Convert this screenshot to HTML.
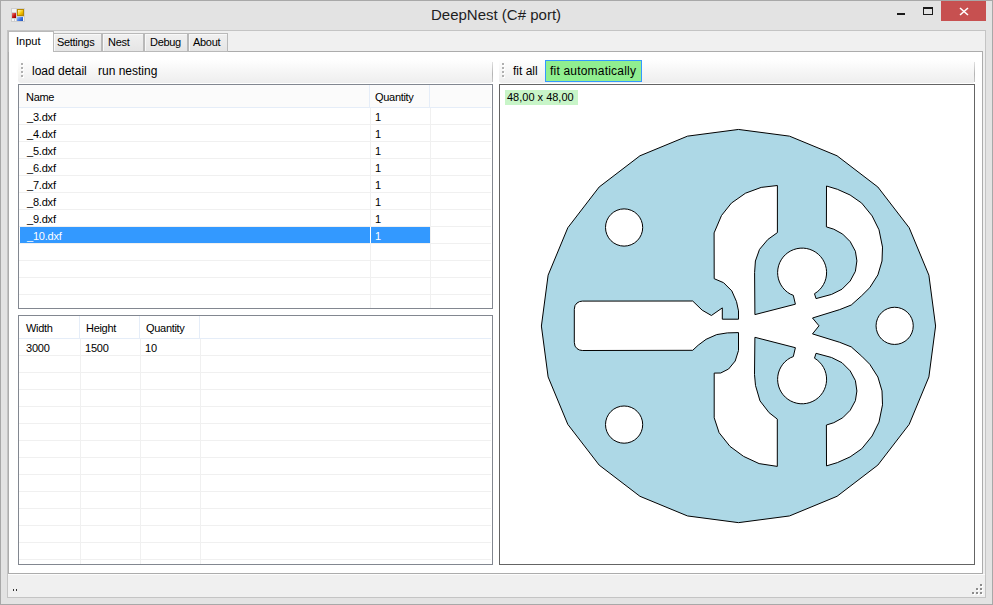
<!DOCTYPE html>
<html><head><meta charset="utf-8">
<style>
*{margin:0;padding:0;box-sizing:border-box}
html,body{width:993px;height:605px;overflow:hidden}
body{position:relative;background:#e3e3e3;font-family:"Liberation Sans",sans-serif;color:#000}
.a{position:absolute}
.frame{left:0;top:0;width:993px;height:605px;border:1px solid #a8a8a8}
.title{left:431px;top:6px;font-size:15px;color:#1e1e1e;white-space:nowrap}
.client{left:7px;top:30px;width:979px;height:568px;border:1px solid #c4c4c4;background:#f0f0f0}
.tab{top:33px;height:19px;border:1px solid #b9b9b9;box-shadow:inset 1px 1px 0 #f8f8f8;background:linear-gradient(#f0f0f0,#e5e5e5);font-size:11px;white-space:nowrap;letter-spacing:-0.3px}
.page{left:8px;top:51px;width:975px;height:523px;border:1px solid #acacac;background:#fff}
.tsel{left:8px;top:31px;width:46px;height:21px;border:1px solid #b9b9b9;border-bottom:none;background:#fff;font-size:11px}
.tool{top:59px;height:24px;border-radius:3px;background:linear-gradient(#ffffff,#f6f6f6 50%,#eeeeee);font-size:12px;white-space:nowrap}
.grip{width:2px;height:2px;background:#b0b0b0}
.lv{border:1px solid #828790;background:#fff;overflow:hidden}
.hd{font-size:11px;white-space:nowrap;letter-spacing:-0.3px}
.cell{font-size:11px;white-space:nowrap;letter-spacing:-0.2px}
</style></head><body>
<div class="a frame"></div>
<!-- icon -->
<div class="a" style="left:11px;top:8px;width:14px;height:14px;background:#cfcfcf"></div>
<div class="a" style="left:12px;top:9px;width:4px;height:3px;background:#f4f4f4"></div>
<div class="a" style="left:12px;top:19px;width:2px;height:2px;background:#f4f4f4"></div>
<div class="a" style="left:15px;top:19px;width:1px;height:2px;background:#f4f4f4"></div>
<div class="a" style="left:23px;top:17px;width:1px;height:4px;background:#f4f4f4"></div>
<div class="a" style="left:17px;top:9px;width:7px;height:7px;background:linear-gradient(135deg,#fff8c0,#f5c400 60%,#c89000);border:1px solid #b88a00"></div>
<div class="a" style="left:12px;top:13px;width:4px;height:5px;background:linear-gradient(135deg,#f08080,#c01010 60%,#800000)"></div>
<div class="a" style="left:17px;top:17px;width:6px;height:4px;background:linear-gradient(135deg,#a0c4ff,#3a70e0 60%,#2050b0)"></div>
<div class="a title">DeepNest (C# port)</div>
<!-- caption buttons -->
<div class="a" style="left:897px;top:13px;width:8px;height:2px;background:#1a1a1a"></div>
<div class="a" style="left:923px;top:7px;width:10px;height:8px;border:1px solid #1a1a1a;border-top-width:2px"></div>
<div class="a" style="left:941px;top:1px;width:45px;height:20px;background:#c75050"></div>
<svg class="a" style="left:959px;top:7px" width="10" height="9"><path d="M1,1 L9,8 M9,1 L1,8" stroke="#fff" stroke-width="1.6"/></svg>

<div class="a client"></div>
<div class="a page"></div>
<div class="a tab" style="left:53px;width:49px"><span class="a" style="left:3px;top:2px">Settings</span></div>
<div class="a tab" style="left:102px;width:42px"><span class="a" style="left:5px;top:2px">Nest</span></div>
<div class="a tab" style="left:144px;width:44px"><span class="a" style="left:5px;top:2px">Debug</span></div>
<div class="a tab" style="left:188px;width:40px"><span class="a" style="left:4px;top:2px">About</span></div>
<div class="a tsel"><span class="a" style="left:7px;top:3px">Input</span></div>

<!-- left toolbar -->
<div class="a tool" style="left:18px;width:475px"></div>
<div class="a" style="left:492px;top:62px;width:1px;height:20px;background:linear-gradient(#e0e0e0,#b4b4b4 60%,#c8c8c8)"></div>
<div class="a" style="left:22px;top:64px;width:2px;height:2px;background:#fff"></div><div class="a grip" style="left:21px;top:63px"></div>
<div class="a" style="left:22px;top:68px;width:2px;height:2px;background:#fff"></div><div class="a grip" style="left:21px;top:67px"></div>
<div class="a" style="left:22px;top:72px;width:2px;height:2px;background:#fff"></div><div class="a grip" style="left:21px;top:71px"></div>
<div class="a" style="left:22px;top:76px;width:2px;height:2px;background:#fff"></div><div class="a grip" style="left:21px;top:75px"></div>
<span class="a" style="left:32px;top:64px;font-size:12px">load detail</span>
<span class="a" style="left:98px;top:64px;font-size:12px">run nesting</span>

<!-- listview 1 -->
<div class="a lv" style="left:18px;top:84px;width:475px;height:225px">
<div class="a" style="left:0;top:0;width:472px;height:22px;background:#fbfbfb"></div>
<div class="a" style="left:0;top:22px;width:472px;height:1px;background:#e5edf8"></div>
<div class="a" style="left:350px;top:0;width:1px;height:22px;background:#e5edf8"></div>
<div class="a" style="left:410px;top:0;width:1px;height:22px;background:#e5edf8"></div>
<span class="a hd" style="left:7px;top:6px">Name</span>
<span class="a hd" style="left:356px;top:6px">Quantity</span>
<div class="a" style="left:0;top:39px;width:472px;height:1px;background:#f0f0f0"></div>
<div class="a" style="left:0;top:56px;width:472px;height:1px;background:#f0f0f0"></div>
<div class="a" style="left:0;top:73px;width:472px;height:1px;background:#f0f0f0"></div>
<div class="a" style="left:0;top:90px;width:472px;height:1px;background:#f0f0f0"></div>
<div class="a" style="left:0;top:107px;width:472px;height:1px;background:#f0f0f0"></div>
<div class="a" style="left:0;top:124px;width:472px;height:1px;background:#f0f0f0"></div>
<div class="a" style="left:0;top:141px;width:472px;height:1px;background:#f0f0f0"></div>
<div class="a" style="left:0;top:158px;width:472px;height:1px;background:#f0f0f0"></div>
<div class="a" style="left:0;top:175px;width:472px;height:1px;background:#f0f0f0"></div>
<div class="a" style="left:0;top:192px;width:472px;height:1px;background:#f0f0f0"></div>
<div class="a" style="left:0;top:209px;width:472px;height:1px;background:#f0f0f0"></div>
<div class="a" style="left:0;top:226px;width:472px;height:1px;background:#f0f0f0"></div>
<div class="a" style="left:351px;top:23px;width:1px;height:200px;background:#f0f0f0"></div>
<div class="a" style="left:411px;top:23px;width:1px;height:200px;background:#f0f0f0"></div>
<span class="a cell" style="left:8px;top:26px;color:#000">_3.dxf</span>
<span class="a cell" style="left:356px;top:26px;color:#000">1</span>
<span class="a cell" style="left:8px;top:43px;color:#000">_4.dxf</span>
<span class="a cell" style="left:356px;top:43px;color:#000">1</span>
<span class="a cell" style="left:8px;top:60px;color:#000">_5.dxf</span>
<span class="a cell" style="left:356px;top:60px;color:#000">1</span>
<span class="a cell" style="left:8px;top:77px;color:#000">_6.dxf</span>
<span class="a cell" style="left:356px;top:77px;color:#000">1</span>
<span class="a cell" style="left:8px;top:94px;color:#000">_7.dxf</span>
<span class="a cell" style="left:356px;top:94px;color:#000">1</span>
<span class="a cell" style="left:8px;top:111px;color:#000">_8.dxf</span>
<span class="a cell" style="left:356px;top:111px;color:#000">1</span>
<span class="a cell" style="left:8px;top:128px;color:#000">_9.dxf</span>
<span class="a cell" style="left:356px;top:128px;color:#000">1</span>
<div class="a" style="left:1px;top:142px;width:410px;height:16px;background:#3399ff"></div>
<div class="a" style="left:351px;top:142px;width:1px;height:16px;background:#fff"></div>
<span class="a cell" style="left:8px;top:145px;color:#fff">_10.dxf</span>
<span class="a cell" style="left:356px;top:145px;color:#fff">1</span>
</div>

<!-- listview 2 -->
<div class="a lv" style="left:18px;top:315px;width:475px;height:250px">
<div class="a" style="left:0;top:22px;width:472px;height:1px;background:#e5edf8"></div>
<div class="a" style="left:60px;top:0;width:1px;height:22px;background:#e5edf8"></div>
<div class="a" style="left:61px;top:23px;width:1px;height:230px;background:#f0f0f0"></div>
<div class="a" style="left:120px;top:0;width:1px;height:22px;background:#e5edf8"></div>
<div class="a" style="left:121px;top:23px;width:1px;height:230px;background:#f0f0f0"></div>
<div class="a" style="left:180px;top:0;width:1px;height:22px;background:#e5edf8"></div>
<div class="a" style="left:181px;top:23px;width:1px;height:230px;background:#f0f0f0"></div>
<span class="a hd" style="left:7px;top:6px">Width</span>
<span class="a hd" style="left:67px;top:6px">Height</span>
<span class="a hd" style="left:127px;top:6px">Quantity</span>
<div class="a" style="left:0;top:39px;width:472px;height:1px;background:#f0f0f0"></div>
<div class="a" style="left:0;top:56px;width:472px;height:1px;background:#f0f0f0"></div>
<div class="a" style="left:0;top:73px;width:472px;height:1px;background:#f0f0f0"></div>
<div class="a" style="left:0;top:90px;width:472px;height:1px;background:#f0f0f0"></div>
<div class="a" style="left:0;top:107px;width:472px;height:1px;background:#f0f0f0"></div>
<div class="a" style="left:0;top:124px;width:472px;height:1px;background:#f0f0f0"></div>
<div class="a" style="left:0;top:141px;width:472px;height:1px;background:#f0f0f0"></div>
<div class="a" style="left:0;top:158px;width:472px;height:1px;background:#f0f0f0"></div>
<div class="a" style="left:0;top:175px;width:472px;height:1px;background:#f0f0f0"></div>
<div class="a" style="left:0;top:192px;width:472px;height:1px;background:#f0f0f0"></div>
<div class="a" style="left:0;top:209px;width:472px;height:1px;background:#f0f0f0"></div>
<div class="a" style="left:0;top:226px;width:472px;height:1px;background:#f0f0f0"></div>
<div class="a" style="left:0;top:243px;width:472px;height:1px;background:#f0f0f0"></div>
<div class="a" style="left:0;top:260px;width:472px;height:1px;background:#f0f0f0"></div>
<span class="a cell" style="left:7px;top:26px">3000</span>
<span class="a cell" style="left:66px;top:26px">1500</span>
<span class="a cell" style="left:126px;top:26px">10</span>
</div>

<!-- right toolbar -->
<div class="a tool" style="left:499px;width:476px"></div>
<div class="a" style="left:974px;top:62px;width:1px;height:20px;background:linear-gradient(#e0e0e0,#b4b4b4 60%,#c8c8c8)"></div>
<div class="a" style="left:503px;top:64px;width:2px;height:2px;background:#fff"></div><div class="a grip" style="left:502px;top:63px"></div>
<div class="a" style="left:503px;top:68px;width:2px;height:2px;background:#fff"></div><div class="a grip" style="left:502px;top:67px"></div>
<div class="a" style="left:503px;top:72px;width:2px;height:2px;background:#fff"></div><div class="a grip" style="left:502px;top:71px"></div>
<div class="a" style="left:503px;top:76px;width:2px;height:2px;background:#fff"></div><div class="a grip" style="left:502px;top:75px"></div>
<span class="a" style="left:513px;top:64px;font-size:12px">fit all</span>
<div class="a" style="left:545px;top:60px;width:97px;height:22px;border:1px solid #3399ff;background:#90ee90"></div>
<span class="a" style="left:550px;top:64px;font-size:12px;letter-spacing:0.2px">fit automatically</span>

<!-- picture box -->
<div class="a" style="left:499px;top:84px;width:476px;height:481px;border:1px solid #646464;background:#fff;overflow:hidden">
<svg class="a" style="left:0;top:0" width="474" height="479"><path fill="#add8e6" fill-rule="evenodd" stroke="#000" stroke-width="1" d="M238.50,44.45 289.51,51.15 337.05,70.79 377.87,102.03 409.19,142.75 428.88,190.17 435.60,241.05 428.88,291.93 409.19,339.35 377.87,380.07 337.05,411.31 289.51,430.95 238.50,437.65 187.49,430.95 139.95,411.31 99.13,380.07 67.81,339.35 48.12,291.93 41.40,241.05 48.12,190.17 67.81,142.75 99.13,102.03 139.95,70.79 187.49,51.15 Z M105.50,142.50 a18.6,18.6 0 1,0 37.2,0 a18.6,18.6 0 1,0 -37.2,0 Z M105.50,339.60 a18.6,18.6 0 1,0 37.2,0 a18.6,18.6 0 1,0 -37.2,0 Z M376.05,240.85 a18.6,18.6 0 1,0 37.2,0 a18.6,18.6 0 1,0 -37.2,0 Z M74.30,224.30 75.00,220.50 77.00,218.00 79.50,216.60 82.30,216.10 192.70,216.00 202.20,225.20 211.40,230.50 222.30,222.90 222.30,234.20 238.50,234.20 238.50,225.90 236.50,216.60 231.80,205.90 223.60,197.70 214.20,193.70 214.10,147.90 221.50,130.50 231.40,118.10 245.50,108.20 261.20,102.40 277.40,100.50 277.40,147.60 267.80,154.50 259.50,164.40 255.40,176.00 254.60,187.60 254.90,229.60 295.40,219.20 293.30,210.30 290.26,209.05 287.49,207.27 284.98,205.13 282.79,202.67 280.94,199.95 279.47,197.00 278.42,193.88 277.79,190.64 277.60,187.36 277.86,184.07 278.55,180.85 279.67,177.75 281.19,174.83 283.09,172.14 285.34,169.73 287.89,167.64 290.69,165.92 293.70,164.58 296.87,163.67 300.12,163.18 303.42,163.14 306.69,163.53 309.87,164.37 312.92,165.62 315.77,167.27 318.38,169.29 320.68,171.64 322.66,174.27 324.26,177.15 325.46,180.22 326.24,183.42 326.58,186.70 326.48,189.99 325.94,193.24 324.97,196.38 323.59,199.37 321.81,202.15 319.68,204.66 317.23,206.87 314.50,208.70 316.00,213.60 331.60,209.40 342.00,204.20 350.20,196.00 355.40,186.30 356.90,175.90 355.40,166.25 350.20,156.60 342.70,149.10 333.80,144.20 326.40,141.90 326.50,101.00 337.40,104.30 350.10,110.00 361.70,118.10 372.10,130.90 379.00,144.80 382.50,162.10 382.00,176.00 377.90,189.90 369.80,202.60 361.70,210.70 351.25,220.00 339.70,224.60 312.50,233.00 319.00,240.80 312.50,248.90 339.70,257.30 351.25,261.90 361.70,271.20 369.80,279.30 377.90,292.00 382.00,305.90 382.50,319.80 379.00,337.10 372.10,351.00 361.70,363.80 350.10,371.90 337.40,377.60 326.50,380.90 326.40,340.00 333.80,337.70 342.70,332.80 350.20,325.30 355.40,315.65 356.90,306.00 355.40,295.60 350.20,285.90 342.00,277.70 331.60,272.50 316.00,268.30 314.50,273.20 317.23,275.03 319.68,277.24 321.81,279.75 323.59,282.53 324.97,285.52 325.94,288.66 326.48,291.91 326.58,295.20 326.24,298.48 325.46,301.68 324.26,304.75 322.66,307.63 320.68,310.26 318.38,312.61 315.77,314.63 312.92,316.28 309.87,317.53 306.69,318.37 303.42,318.76 300.12,318.72 296.87,318.23 293.70,317.32 290.69,315.98 287.89,314.26 285.34,312.17 283.09,309.76 281.19,307.07 279.67,304.15 278.55,301.05 277.86,297.83 277.60,294.54 277.79,291.26 278.42,288.02 279.47,284.90 280.94,281.95 282.79,279.23 284.98,276.77 287.49,274.63 290.26,272.85 293.30,271.60 295.40,262.70 254.90,252.30 254.50,289.50 255.50,300.50 260.00,315.90 269.10,327.70 277.30,334.10 277.30,381.40 259.10,378.60 243.60,371.40 230.00,361.40 219.10,347.70 214.20,332.80 214.20,288.10 220.70,288.00 228.60,284.00 235.20,276.00 238.50,265.50 238.50,247.60 227.30,247.90 216.70,249.60 206.10,254.30 198.20,260.20 192.70,265.30 82.30,265.50 79.50,265.00 77.00,263.60 75.00,261.10 74.30,257.30 Z"/></svg>
<div class="a" style="left:5px;top:5px;width:73px;height:15px;background:#c8f5c8"></div>
<span class="a" style="left:7px;top:6px;font-size:11px">48,00 x 48,00</span>
</div>

<!-- status strip -->
<div class="a" style="left:8px;top:574px;width:977px;height:1px;background:#fcfcfc"></div>
<div class="a" style="left:13px;top:589px;width:1px;height:2px;background:#333"></div>
<div class="a" style="left:16px;top:589px;width:1px;height:2px;background:#333"></div>
<div class="a" style="left:981px;top:585px;width:2px;height:2px;background:#fff"></div><div class="a" style="left:980px;top:584px;width:2px;height:2px;background:#8c8c8c"></div>
<div class="a" style="left:977px;top:589px;width:2px;height:2px;background:#fff"></div><div class="a" style="left:976px;top:588px;width:2px;height:2px;background:#8c8c8c"></div>
<div class="a" style="left:981px;top:589px;width:2px;height:2px;background:#fff"></div><div class="a" style="left:980px;top:588px;width:2px;height:2px;background:#8c8c8c"></div>
<div class="a" style="left:973px;top:593px;width:2px;height:2px;background:#fff"></div><div class="a" style="left:972px;top:592px;width:2px;height:2px;background:#8c8c8c"></div>
<div class="a" style="left:977px;top:593px;width:2px;height:2px;background:#fff"></div><div class="a" style="left:976px;top:592px;width:2px;height:2px;background:#8c8c8c"></div>
<div class="a" style="left:981px;top:593px;width:2px;height:2px;background:#fff"></div><div class="a" style="left:980px;top:592px;width:2px;height:2px;background:#8c8c8c"></div>
</body></html>
